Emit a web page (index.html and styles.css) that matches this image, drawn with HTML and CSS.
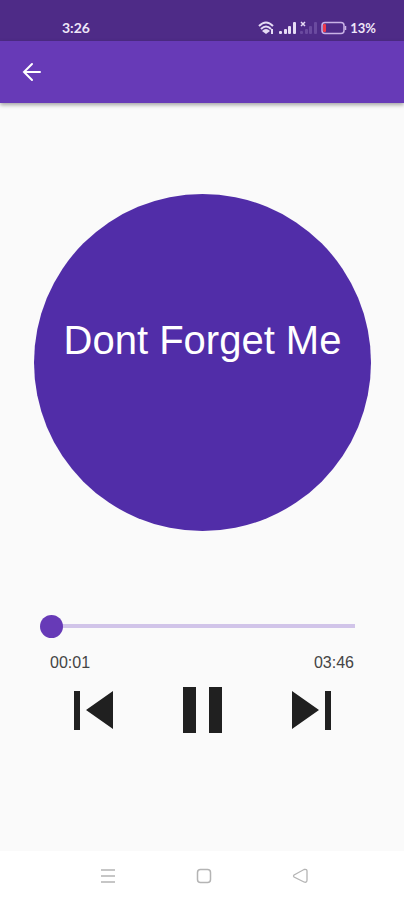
FILE: index.html
```html
<!DOCTYPE html>
<html lang="en">
<head>
    <meta charset="UTF-8">
    <meta name="viewport" content="width=device-width, initial-scale=1.0">
    <title>Dont Forget Me</title>
    <link rel="stylesheet" href="styles.css">
</head>
<body>
    <div class="status-bar">
        <span class="clock">3:26</span>
        <div class="status-icons">
            <!-- wifi -->
            <svg width="18" height="14" viewBox="0 0 18 14" fill="none" stroke="#e6dcf5" stroke-width="2">
                <path d="M1 5 Q8 -2 15 5"/>
                <path d="M3 8 Q8 3 13 8"/>
                <path d="M4 10 Q8 6 12 10 L8 13 Z" fill="#e6dcf5" stroke="none"/>
                <path d="M14 8 V13"/>
            </svg>
            <!-- sim 1 -->
            <svg width="18" height="14" viewBox="0 0 18 14" fill="#e6dcf5">
                <rect x="0" y="10" width="3" height="3" rx="1"/>
                <rect x="5" y="8" width="3" height="5" rx="1"/>
                <rect x="9" y="5" width="3" height="8" rx="1"/>
                <rect x="14" y="1" width="3" height="12" rx="1"/>
            </svg>
            <!-- sim 2, no service -->
            <svg width="18" height="14" viewBox="0 0 18 14" fill="#6a4a9f">
                <path d="M1 1 L5 5 M5 1 L1 5" stroke="#e6dcf5" stroke-width="1.500"/>
                <rect x="0" y="10" width="3" height="3" rx="1"/>
                <rect x="5" y="8" width="3" height="5" rx="1"/>
                <rect x="9" y="5" width="3" height="8" rx="1"/>
                <rect x="14" y="1" width="3" height="12" rx="1"/>
            </svg>
            <!-- battery -->
            <svg width="26" height="14" viewBox="0 0 26 14">
                <rect x="1" y="1.500" width="22" height="11" rx="3" fill="none" stroke="#c9b3e6" stroke-width="1.500"/>
                <rect x="2" y="3" width="3" height="8" rx="1" fill="#ee3a4c"/>
                <path d="M24.500 5 V9" stroke="#c9b3e6" stroke-width="1.500"/>
            </svg>
            <span class="battery-level">13%</span>
        </div>
    </div>

    <header class="app-bar">
        <button class="btn-back" aria-label="Back">
            <svg width="24" height="24" viewBox="0 0 24 24" fill="none" stroke="white" stroke-width="2" stroke-linecap="round">
                <path d="M20 12 H4 M12 4 L4 12 L12 20"/>
            </svg>
        </button>
    </header>

    <main class="container">
        <div class="cover">
            <h1>Dont Forget Me</h1>
        </div>

        <div class="player">
            <input class="seek" type="range" min="0" max="226" value="1" aria-label="Position">
            <div class="times">
                <span>00:01</span>
                <span>03:46</span>
            </div>
            <div class="controls">
                <button aria-label="Previous">
                    <svg width="48" height="48" viewBox="0 0 48 48" fill="#202020">
                        <path d="M5 5 H11 V44 H5 Z M44 5 V43 L17 24 Z"/>
                    </svg>
                </button>
                <button aria-label="Pause">
                    <svg width="48" height="48" viewBox="0 0 48 48" fill="#202020">
                        <path d="M5 1 H18 V47 H5 Z M31 1 H44 V47 H31 Z"/>
                    </svg>
                </button>
                <button aria-label="Next">
                    <svg width="48" height="48" viewBox="0 0 48 48" fill="#202020">
                        <path d="M5 5 V43 L32 24 Z M38 5 H44 V44 H38 Z"/>
                    </svg>
                </button>
            </div>
        </div>
    </main>

    <nav class="nav-bar">
        <button aria-label="Recent apps">
            <svg width="16" height="16" viewBox="0 0 16 16" fill="none" stroke="#b4b4b4">
                <path d="M1 2 H15 M1 8 H15 M1 14 H15" stroke-width="1.500"/>
            </svg>
        </button>
        <button aria-label="Home">
            <svg width="16" height="16" viewBox="0 0 16 16" fill="none" stroke="#b4b4b4">
                <rect x="1.500" y="1.500" width="13" height="13" rx="3" stroke-width="1.500"/>
            </svg>
        </button>
        <button aria-label="Back">
            <svg width="16" height="16" viewBox="0 0 16 16" fill="none" stroke="#b4b4b4">
                <path d="M2 7 L12 1.500 Q15 1 15 3 V12 Q15 15 12 14 L2 9 Q1 8 2 7 Z" stroke-width="1.300"/>
            </svg>
        </button>
    </nav>
</body>
</html>
```

FILE: styles.css
```css
*{
    box-sizing: border-box;
}

body{
    display: flex;
    flex-direction: column;
    min-height: 100vh;
    margin: 0;
    background-color: #fafafa;
    font-family: "Liberation Sans", Arial, sans-serif;
}

button{
    display: flex;
    justify-content: center;
    align-items: center;
    padding: 0;
    border: 0;
    background: none;
    cursor: pointer;
}

.status-bar{
    display: flex;
    justify-content: space-between;
    align-items: center;
    height: 41px;
    padding: 14px 28px 0 62px;
    background-color: #4e2b87;
    color: #eee6f8;
    font-family: Lato, sans-serif;
    font-size: 14px;
    font-weight: bold;
}

.status-icons{
    display: flex;
    align-items: center;
    gap: 3px;
}

.battery-level{
    font-size: 13px;
}

.app-bar{
    display: flex;
    align-items: center;
    height: 62px;
    padding: 0 20px;
    background-color: #673ab7;
    box-shadow: 0 2px 4px rgba(0, 0, 0, 0.35);
}

.container{
    flex: 1;
    padding-top: 91px;
}

.cover{
    display: flex;
    justify-content: center;
    align-items: center;
    aspect-ratio: 1;
    margin: 0 33px 0 34px;
    padding-bottom: 44px;
    border-radius: 50%;
    background-color: #512da8;
}

h1{
    margin: 0;
    color: white;
    font-size: 40px;
    font-weight: normal;
    white-space: nowrap;
}

.player{
    padding: 83px 38px 0;
}

.seek{
    display: block;
    width: calc(100% - 1px);
    height: 24px;
    margin: 0 0 0 1px;
    appearance: none;
    background: linear-gradient(#d1c4e9, #d1c4e9) center / calc(100% - 22px) 4px no-repeat;
}

.seek::-webkit-slider-thumb{
    appearance: none;
    width: 23px;
    height: 23px;
    border-radius: 50%;
    background-color: #673ab7;
}

.times{
    display: flex;
    justify-content: space-between;
    padding: 16px 12px 0;
    color: #444;
    font-size: 16px;
    line-height: 18px;
}

.controls{
    display: grid;
    grid-template-columns: repeat(3, 1fr);
    padding-top: 14px;
}

.nav-bar{
    display: grid;
    grid-template-columns: repeat(3, 1fr);
    height: 49px;
    padding: 0 56px 0 60px;
    background-color: white;
}
```
